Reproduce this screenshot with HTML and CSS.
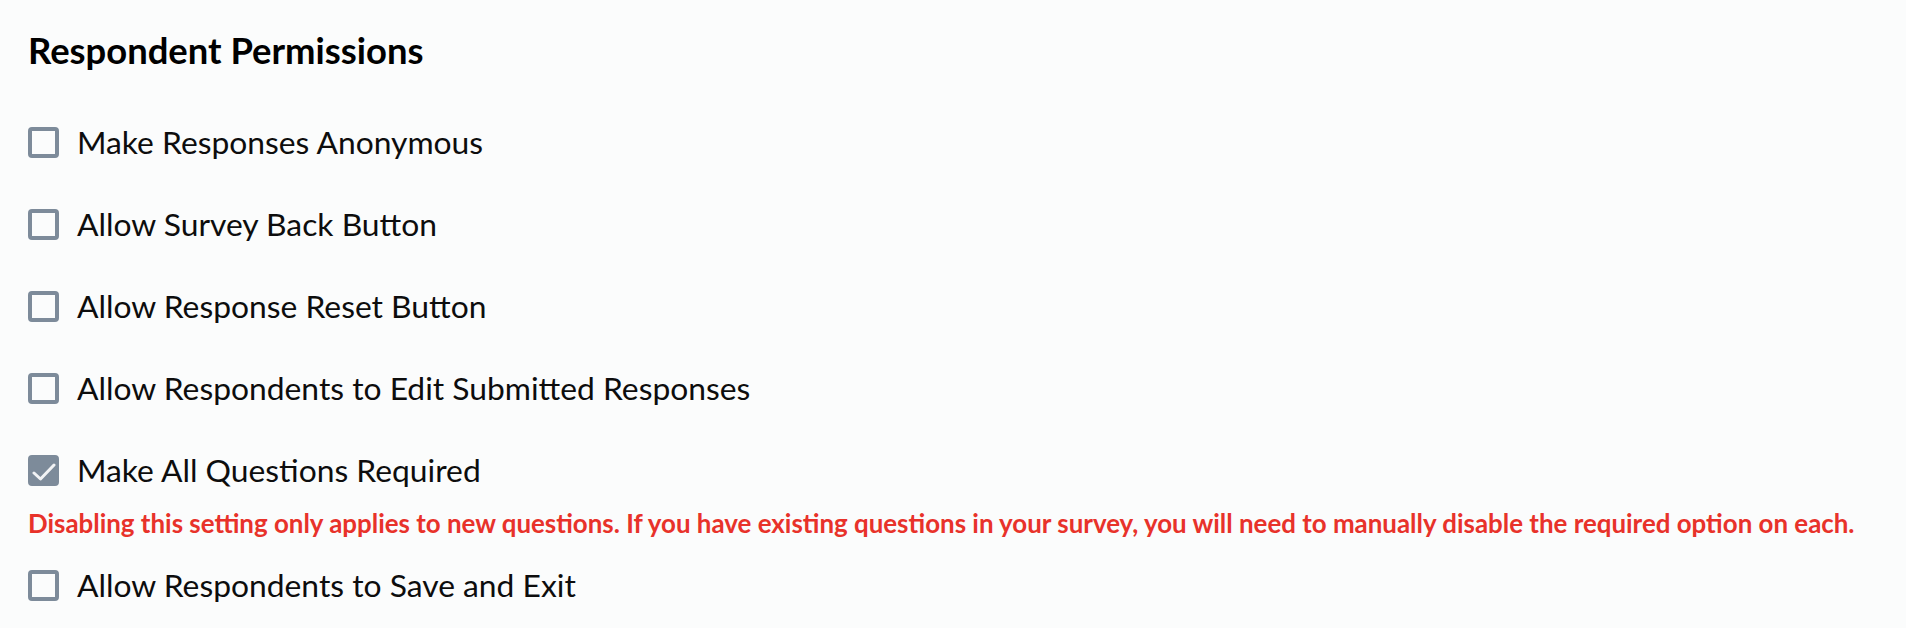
FILE: index.html
```html
<!DOCTYPE html>
<html lang="en">
<head>
    <meta charset="UTF-8">
    <meta name="viewport" content="width=device-width, initial-scale=1.0">
    <title>Respondent Permissions</title>
    <link rel="stylesheet" href="styles.css">
</head>
<body>
    <div class="permissions">
        <h2 class="title">Respondent Permissions</h2>

        <label class="option">
            <span class="box"></span>
            <span>Make Responses Anonymous</span>
        </label>
        <label class="option">
            <span class="box"></span>
            <span>Allow Survey Back Button</span>
        </label>
        <label class="option">
            <span class="box"></span>
            <span>Allow Response Reset Button</span>
        </label>
        <label class="option">
            <span class="box"></span>
            <span>Allow Respondents to Edit Submitted Responses</span>
        </label>
        <label class="option">
            <span class="box checked">
                <svg viewBox="0 0 31 31" width="31" height="31">
                    <path d="M6 18 L12.5 24 L26 10" fill="none" stroke="#fff" stroke-width="3" stroke-linecap="round" stroke-linejoin="round"/>
                </svg>
            </span>
            <span>Make All Questions Required</span>
        </label>
        <p class="warning">Disabling this setting only applies to new questions. If you have existing questions in your survey, you will need to manually disable the required option on each.</p>
        <label class="option last">
            <span class="box"></span>
            <span>Allow Respondents to Save and Exit</span>
        </label>
    </div>
</body>
</html>
```

FILE: styles.css
```css
body {
    margin: 0;
    background-color: #fbfcfc;
    font-family: Lato, "Open Sans", sans-serif;
    color: #0d0d0d;
}

.permissions {
    display: flex;
    flex-direction: column;
    padding: 30px 28px 0;
}

.title {
    margin: 0 0 52px;
    font-size: 36.4px;
    line-height: 40px;
    font-weight: 700;
    color: #000;
}

.option {
    display: flex;
    align-items: center;
    gap: 18px;
    height: 40px;
    margin-bottom: 42px;
    font-size: 31.8px;
    cursor: pointer;
}

.box {
    box-sizing: border-box;
    width: 31px;
    height: 31px;
    border: 4px solid #7d8b9a;
    border-radius: 4px;
    flex-shrink: 0;
    position: relative;
}

.box.checked {
    background: #7d8b9a;
}

.box.checked svg {
    position: absolute;
    top: -4px;
    left: -4px;
    opacity: 0.9;
}

.warning {
    margin: -24px 0 27px;
    font-size: 25.9px;
    line-height: 30px;
    font-weight: 700;
    color: #e8322a;
}

.option.last {
    margin-bottom: 0;
}
```
